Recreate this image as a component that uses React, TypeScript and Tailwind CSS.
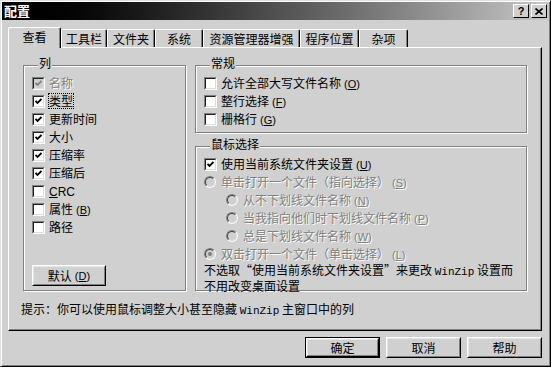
import React from "react";

const dimText = "text-[#808080] [text-shadow:1px_1px_0_#ffffff]";

function Mn({ k, dim }: { k: string; dim?: boolean }) {
  return (
    <span className={`ml-[3px] text-[11px] font-['Liberation_Sans',sans-serif] ${dim ? dimText : ""}`}>
      (<span className="underline">{k}</span>)
    </span>
  );
}

function Box({ checked, dim }: { checked?: boolean; dim?: boolean }) {
  return (
    <span className="flex h-[13px] w-[13px] shrink-0 border border-t-[#808080] border-l-[#808080] border-b-white border-r-white">
      <span
        className={`flex flex-1 items-center justify-center border border-t-[#202020] border-l-[#202020] border-b-[#dcdcdc] border-r-[#dcdcdc] ${
          dim ? "bg-[#d0d0d0]" : "bg-white"
        }`}
      >
        {checked && (
          <svg width="7" height="7" viewBox="0 0 7 7">
            <path d="M0.5 3 L2.5 5 L6.5 1" fill="none" stroke={dim ? "#808080" : "#000"} strokeWidth="1.8" />
          </svg>
        )}
      </span>
    </span>
  );
}

function Radio({ on }: { on?: boolean }) {
  return (
    <span className="flex h-[12px] w-[12px] shrink-0 rounded-full border border-t-[#808080] border-l-[#808080] border-b-white border-r-white">
      <span className="flex flex-1 items-center justify-center rounded-full border border-t-[#404040] border-l-[#404040] border-b-[#dcdcdc] border-r-[#dcdcdc] bg-[#d0d0d0]">
        {on && <span className="h-[4px] w-[4px] rounded-full bg-[#808080]" />}
      </span>
    </span>
  );
}

function Btn({ children, def, w }: { children: React.ReactNode; def?: boolean; w: string }) {
  const inner = (
    <span className="flex h-full w-full border border-t-white border-l-white border-b-black border-r-black">
      <span className="flex flex-1 items-center justify-center border border-t-[#e4e4e4] border-l-[#e4e4e4] border-b-[#808080] border-r-[#808080] text-[12px] leading-[14px]">
        {children}
      </span>
    </span>
  );
  return def ? (
    <span className={`flex h-[21px] ${w} border border-black`}>{inner}</span>
  ) : (
    <span className={`flex h-[21px] ${w}`}>{inner}</span>
  );
}

function Group({ label, className, children }: { label: string; className: string; children?: React.ReactNode }) {
  return (
    <div
      className={`flex flex-col border border-[#808080] shadow-[inset_1px_1px_0_#ffffff,1px_1px_0_#ffffff] ${className}`}
    >
      <span className="-mt-[10px] ml-[6px] block w-fit bg-[#d0d0d0] px-[1px] text-[12px] leading-[14px]">{label}</span>
      {children}
    </div>
  );
}

function CRow({ checked, dim, children, focus }: { checked?: boolean; dim?: boolean; children: React.ReactNode; focus?: boolean }) {
  return (
    <div className="flex h-[18px] items-center gap-[4px]">
      <Box checked={checked} dim={dim} />
      <span
        className={`whitespace-nowrap text-[12px] leading-[14px] ${dim ? dimText : ""} ${
          focus ? "outline-1 outline-dotted outline-black" : ""
        }`}
      >
        {children}
      </span>
    </div>
  );
}

function RRow({ on, sub, children }: { on?: boolean; sub?: boolean; children: React.ReactNode }) {
  return (
    <div className={`flex h-[18px] items-center gap-[5px] ${sub ? "ml-[22px]" : ""}`}>
      <Radio on={on} />
      <span className={`whitespace-nowrap text-[12px] leading-[14px] ${dimText}`}>{children}</span>
    </div>
  );
}

const tabs = [
  { label: "查看", w: "w-[53px]", active: true },
  { label: "工具栏", w: "w-[46px]" },
  { label: "文件夹", w: "w-[48px]" },
  { label: "系统", w: "w-[48px]" },
  { label: "资源管理器增强", w: "w-[97px]" },
  { label: "程序位置", w: "w-[59px]" },
  { label: "杂项", w: "w-[49px]" },
];

export default function App() {
  return (
    <div className="flex h-[367px] w-[551px] flex-col border border-t-[#e0e0e0] border-l-[#e0e0e0] border-r-black border-b-black bg-[#d0d0d0] p-[1px] font-['Noto_Sans_CJK_SC',sans-serif] text-black shadow-[inset_1px_1px_0_#ffffff,inset_-1px_-1px_0_#808080]">
      {/* title bar */}
      <div className="flex h-[18px] items-center bg-linear-to-r from-black via-[#505050] to-[#c8c8c8] pl-[2px] pr-[2px]">
        <span className="text-[13px] font-bold leading-[16px] text-white">配置</span>
        <div className="ml-auto flex gap-[2px]">
          <span className="flex h-[14px] w-[16px] items-center justify-center border border-t-white border-l-white border-b-black border-r-black bg-[#d0d0d0] font-['Liberation_Sans',sans-serif] text-[11px] font-bold leading-[12px]">
            ?
          </span>
          <span className="flex h-[14px] w-[16px] items-center justify-center border border-t-white border-l-white border-b-black border-r-black bg-[#d0d0d0]">
            <svg width="8" height="7" viewBox="0 0 8 7">
              <path d="M0.5 0.5 L7.5 6.5 M7.5 0.5 L0.5 6.5" stroke="#000" strokeWidth="1.6" />
            </svg>
          </span>
        </div>
      </div>

      {/* tabs */}
      <div className="relative z-10 -mb-[1px] ml-[6px] mt-[7px] flex h-[21px] items-end">
        {tabs.map((t) =>
          t.active ? (
            <div
              key={t.label}
              className={`flex h-[21px] ${t.w} justify-center rounded-t-[2px] border-l border-t border-r border-l-white border-t-white border-r-black bg-[#d0d0d0] pt-[2px] text-[12px] leading-[14px] shadow-[inset_-1px_0_0_#808080]`}
            >
              {t.label}
            </div>
          ) : (
            <div
              key={t.label}
              className={`mb-[1px] flex h-[18px] ${t.w} justify-center rounded-t-[2px] border-l border-t border-r border-l-white border-t-white border-r-black pt-[2px] text-[12px] leading-[14px] shadow-[inset_-1px_0_0_#808080]`}
            >
              {t.label}
            </div>
          )
        )}
      </div>

      {/* panel */}
      <div className="ml-[6px] flex h-[284px] w-[534px] flex-col border border-t-white border-l-white border-r-black border-b-black pl-[14px] pt-[17px] shadow-[inset_-1px_-1px_0_#808080]">
        <div className="flex gap-[9px]">
          <Group label="列" className="h-[226px] w-[163px] pl-[8px]">
            <div className="mt-[4px] flex flex-col">
              <CRow checked dim>
                名称
              </CRow>
              <CRow checked focus>
                类型
              </CRow>
              <CRow checked>更新时间</CRow>
              <CRow checked>大小</CRow>
              <CRow checked>压缩率</CRow>
              <CRow checked>压缩后</CRow>
              <CRow>
                <span className="font-['Liberation_Sans',sans-serif]">
                  <span className="underline">C</span>RC
                </span>
              </CRow>
              <CRow>
                属性
                <Mn k="B" />
              </CRow>
              <CRow>路径</CRow>
            </div>
            <div className="mb-[4px] mt-auto">
              <Btn w="w-[74px]">
                默认
                <Mn k="D" />
              </Btn>
            </div>
          </Group>

          <div className="flex w-[332px] flex-col">
            <Group label="常规" className="h-[68px] pl-[8px]">
              <div className="mt-[4px] flex flex-col">
                <CRow>
                  允许全部大写文件名称
                  <Mn k="O" />
                </CRow>
                <CRow>
                  整行选择
                  <Mn k="F" />
                </CRow>
                <CRow>
                  栅格行
                  <Mn k="G" />
                </CRow>
              </div>
            </Group>
            <Group label="鼠标选择" className="mt-[13px] h-[145px] pl-[8px]">
              <div className="mt-[4px] flex flex-col">
                <CRow checked>
                  使用当前系统文件夹设置
                  <Mn k="U" />
                </CRow>
                <RRow>
                  单击打开一个文件（指向选择）
                  <Mn k="S" dim />
                </RRow>
                <RRow sub>
                  从不下划线文件名称
                  <Mn k="N" dim />
                </RRow>
                <RRow sub>
                  当我指向他们时下划线文件名称
                  <Mn k="P" dim />
                </RRow>
                <RRow sub>
                  总是下划线文件名称
                  <Mn k="W" dim />
                </RRow>
                <RRow on>
                  双击打开一个文件（单击选择）
                  <Mn k="L" dim />
                </RRow>
                <div className="flex flex-col text-[12px] leading-[13px]">
                  <span className="whitespace-nowrap">
                    不选取“使用当前系统文件夹设置”来更改 <span className="font-['Liberation_Mono',monospace] text-[11px]">WinZip</span> 设置而
                  </span>
                  <span className="whitespace-nowrap">不用改变桌面设置</span>
                </div>
              </div>
            </Group>
          </div>
        </div>
        <div className="-ml-[2px] mt-[11px] whitespace-nowrap text-[12px] leading-[14px]">
          提示：你可以使用鼠标调整大小甚至隐藏 <span className="font-['Liberation_Mono',monospace] text-[11px]">WinZip</span> 主窗口中的列
        </div>
      </div>

      {/* buttons */}
      <div className="mr-[7px] mt-[6px] flex justify-end gap-[6px]">
        <Btn def w="w-[75px]">
          确定
        </Btn>
        <Btn w="w-[75px]">取消</Btn>
        <Btn w="w-[75px]">帮助</Btn>
      </div>
    </div>
  );
}
